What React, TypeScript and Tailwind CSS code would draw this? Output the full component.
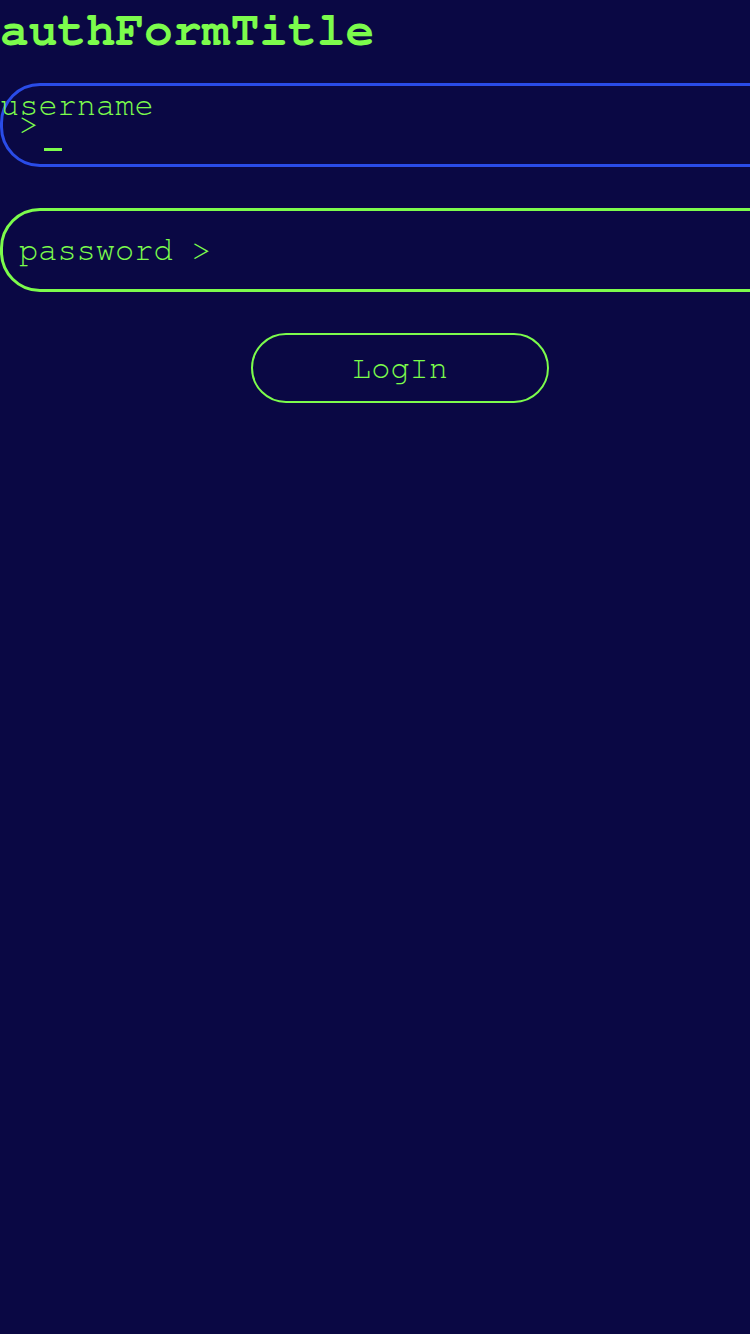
import { useState } from 'react';

const mono = "font-['FreeMono','Courier_New',monospace]";

const AuthForm = () => {
  const [password] = useState('');

  return (
    <div className={`min-h-[1334px] w-full overflow-hidden bg-[#0a0844] text-[#7cfc4c] ${mono}`}>
      <div className="w-[800px]">
        <h1 className="text-[48px] font-bold leading-[63px]">authFormTitle</h1>

        <form className="mt-[20px] flex flex-col gap-[41px]" onSubmit={(e) => e.preventDefault()}>
          {/* focused field: label floats over the border */}
          <div className="relative h-[84px] w-full rounded-[40px] border-[3px] border-[#2a4ce8] pl-[16px] pt-[14px]">
            <span className="absolute left-[-3px] top-[-5px] text-[32px]">username</span>
            <div className="text-[32px]">&gt;</div>
            <div className="ml-[25px] h-[3px] w-[18px] bg-[#7cfc4c]" />
          </div>

          <div className="flex h-[84px] w-full items-center rounded-[40px] border-[3px] border-[#7cfc4c] pl-[16px]">
            <span className="text-[32px]">password &gt;{password}</span>
          </div>

          <button
            type="submit"
            className="mx-auto h-[70px] w-[298px] rounded-full border-2 border-[#7cfc4c] text-[32px]"
          >
            LogIn
          </button>
        </form>
      </div>
    </div>
  );
};

export default function App() {
  return <AuthForm />;
}
